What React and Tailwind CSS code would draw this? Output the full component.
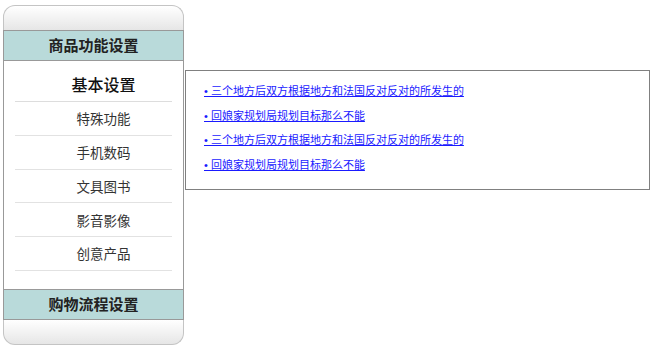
const menu = ["特殊功能", "手机数码", "文具图书", "影音影像", "创意产品"];

const links = [
  "• 三个地方后双方根据地方和法国反对反对的所发生的",
  "• 回娘家规划局规划目标那么不能",
  "• 三个地方后双方根据地方和法国反对反对的所发生的",
  "• 回娘家规划局规划目标那么不能",
];

export default function App() {
  return (
    <div
      className="flex items-start pl-[3px] pt-[5px] bg-white min-h-[355px]"
      style={{ fontFamily: '"Noto Sans CJK SC", "Noto Sans", sans-serif' }}
    >
      {/* Sidebar */}
      <div className="w-[181px] shrink-0">
        <div className="h-[25px] rounded-t-[12px] border border-b-0 border-[#c4c4c4] bg-gradient-to-b from-white to-[#e6e6e6]" />
        <div className="h-[31px] flex items-center justify-center bg-[#b9dada] border border-[#999] text-[15px] font-bold text-[#222]">
          商品功能设置
        </div>
        <div className="bg-white border-x border-[#999] pt-[6px] pb-[18px]">
          <div className="h-[35px] mx-[11px] pl-[20px] flex items-center justify-center border-b border-[#ddd] text-[16px] font-medium text-[#111]">
            基本设置
          </div>
          {menu.map((item) => (
            <div
              key={item}
              className="h-[33.8px] mx-[11px] pl-[20px] flex items-center justify-center border-b border-[#e2e2e2] text-[13.5px] text-[#333]"
            >
              {item}
            </div>
          ))}
        </div>
        <div className="h-[31px] flex items-center justify-center bg-[#b9dada] border border-[#999] text-[15px] font-bold text-[#222]">
          购物流程设置
        </div>
        <div className="h-[25px] rounded-b-[12px] border border-t-0 border-[#c4c4c4] bg-gradient-to-b from-white to-[#e6e6e6]" />
      </div>

      {/* Content */}
      <div className="ml-[1px] mt-[65px] w-[465px] h-[120px] border border-[#808080] pl-[18px] pt-[14px]">
        <ul
          className="flex flex-col gap-[12.5px]"
          style={{ fontFamily: '"Liberation Sans", "Noto Sans CJK SC", sans-serif' }}
        >
          {links.map((text, i) => (
            <li key={i} className="text-[11px] leading-[12px]">
              <a href="#" className="text-[#1a1aff] underline">
                {text}
              </a>
            </li>
          ))}
        </ul>
      </div>
    </div>
  );
}
